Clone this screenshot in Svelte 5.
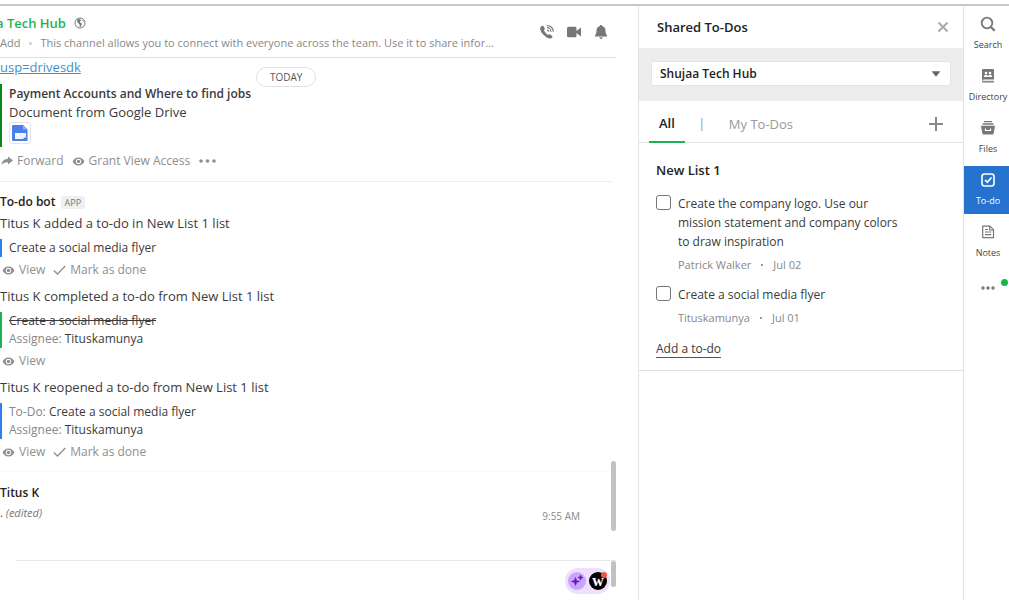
<script>
  const updates = [
    {
      text: "Titus K added a to-do in New List 1 list",
      title: "Create a social media flyer",
      canFinish: true,
    },
    {
      text: "Titus K completed a to-do from New List 1 list",
      title: "Create a social media flyer",
      assignee: "Tituskamunya",
      done: true,
    },
    {
      text: "Titus K reopened a to-do from New List 1 list",
      label: "To-Do:",
      title: "Create a social media flyer",
      assignee: "Tituskamunya",
      canFinish: true,
    },
  ];

  let todos = [
    {
      id: 1,
      text: "Create the company logo. Use our mission statement and company colors to draw inspiration",
      who: "Patrick Walker",
      due: "Jul 02",
      done: false,
    },
    {
      id: 2,
      text: "Create a social media flyer",
      who: "Tituskamunya",
      due: "Jul 01",
      done: false,
    },
  ];

  const apps = ["Search", "Directory", "Files", "To-do", "Notes"];

  let activeApp = "To-do";
  let tab = "all";
  let channel = "Shujaa Tech Hub";
</script>

{#snippet eye()}
  <svg width="13" height="9" viewBox="0 0 14 10" aria-hidden="true">
    <path
      fill="currentColor"
      fill-rule="evenodd"
      d="M7 .5C3.800.5 1.300 2.500 .5 5c.8 2.500 3.300 4.500 6.500 4.500s5.700-2 6.500-4.500C12.700 2.500 10.200.5 7 .5zM7 2a3 3 0 1 1 0 6 3 3 0 0 1 0-6z"
    />
    <circle cx="7" cy="5" r="1.900" fill="currentColor" />
  </svg>
{/snippet}

<div class="app">
  <main class="chat">
    <header class="chat-header">
      <div class="heading">
        <div class="title-row">
          <h1>a Tech Hub</h1>
          <svg width="12" height="12" viewBox="0 0 12 12" aria-hidden="true">
            <circle cx="6" cy="6" r="5" fill="none" stroke="#777" />
            <path d="M3 2.500 5.500 2l2 1.200-1.500 1L6.500 6 8 6.500 7 9.500 5.800 10 5.500 7.200 3.500 5.500zM8.500 2.500l1.500 2-1.200.3z" fill="#777" />
          </svg>
        </div>
        <div class="topic">
          <button type="button">Add</button>
          <i></i>
          <span>This channel allows you to connect with everyone across the team. Use it to share infor...</span>
        </div>
      </div>
      <div class="calls">
        <button type="button" aria-label="Call">
          <svg width="16" height="16" viewBox="0 0 16 16">
            <path d="M2.300 2.200c1-.9 2-.6 2.500.3l.9 1.700c.3.700.1 1.200-.7 1.900-.4.500 3.200 5 4 4.600.9-.6 1.400-.7 2-.3l1.900 1.300c.8.600.8 1.500-.2 2.200-1.200.9-2.800.8-4.500-.2C5 12 2.300 9 1.400 6.100.9 4.500 1.200 3.200 2.300 2.200z" fill="#777" />
            <path d="M8 1.500c3.500 0 6.300 2.700 6.300 6.200M8 3.700c2.200 0 4 1.800 4 4M8 6c1 0 1.700.7 1.700 1.700" fill="none" stroke="#777" stroke-width="1.200" />
          </svg>
        </button>
        <button type="button" aria-label="Video">
          <svg width="16" height="16" viewBox="0 0 16 16">
            <path d="M2.500 2.800h6.500a1.500 1.500 0 0 1 1.500 1.500v7.400a1.500 1.500 0 0 1-1.500 1.500H2.500A1.500 1.500 0 0 1 1 11.700V4.300a1.500 1.500 0 0 1 1.500-1.500zM10.500 7l4.500-3.400v8.800L10.500 9z" fill="#777" />
          </svg>
        </button>
        <button type="button" aria-label="Notifications">
          <svg width="16" height="16" viewBox="0 0 16 16">
            <path d="M8 1c.7 0 1.200.5 1.200 1.100C11.500 2.700 12.500 4.400 12.500 6.500c0 3 .6 3.700 1.500 4.700v1.300H2v-1.300c.9-1 1.500-1.700 1.500-4.700 0-2.100 1-3.800 3.300-4.400C6.800 1.500 7.300 1 8 1zM6.300 13.200h3.400C9.500 14.300 8.900 14.800 8 14.800s-1.500-.5-1.700-1.600z" fill="#777" />
          </svg>
        </button>
      </div>
    </header>

    <div class="messages">
      <span class="day">TODAY</span>
      <article class="message first">
        <a class="drive-link" href="#doc">usp=drivesdk</a>
        <div class="quote drive">
          <strong>Payment Accounts and Where to find jobs</strong>
          <p>Document from Google Drive</p>
          <span class="doc">
            <svg width="18" height="18" viewBox="0 0 18 18" aria-hidden="true">
              <path d="M2 1h10l4.500 4.500V17H2a1 1 0 0 1-1-1V2a1 1 0 0 1 1-1z" fill="#4a80e8" />
              <path d="M12 1v4.500h4.500z" fill="#8fb1f3" />
              <path d="M4 9h11v4.500h-1.500L12 15H4z" fill="#eef3fd" />
            </svg>
          </span>
        </div>
        <div class="actions">
          <button type="button">
            <svg width="12" height="10" viewBox="0 0 12 10" aria-hidden="true">
              <path d="M7 .5 12 4.500l-5 4V6.300C3.800 6.200 2 7 .5 9 .8 5.500 3 3 7 2.800z" fill="currentColor" />
            </svg>
            Forward
          </button>
          <button type="button">{@render eye()}Grant View Access</button>
          <button type="button" aria-label="More">
            <svg width="18" height="4" viewBox="0 0 18 4">
              <g fill="currentColor"><circle cx="3" cy="2" r="1.800" /><circle cx="9.500" cy="2" r="1.800" /><circle cx="16" cy="2" r="1.800" /></g>
            </svg>
          </button>
        </div>
      </article>

      <article class="message bot">
        <h2>To-do bot <small>APP</small></h2>
        {#each updates as update}
          <section class="update">
            <p>{update.text}</p>
            <div class="quote" class:done={update.done}>
              <div>
                {#if update.label}<em>{update.label}</em>{/if}
                <span class="task">{update.title}</span>
              </div>
              {#if update.assignee}
                <div><em>Assignee:</em> {update.assignee}</div>
              {/if}
            </div>
            <div class="actions">
              <button type="button">{@render eye()}View</button>
              {#if update.canFinish}
                <button type="button">
                  <svg width="13" height="10" viewBox="0 0 13 10" aria-hidden="true">
                    <path d="M.8 5.500 4.500 9 12.300 1" fill="none" stroke="currentColor" stroke-width="1.300" />
                  </svg>
                  Mark as done
                </button>
              {/if}
            </div>
          </section>
        {/each}
      </article>

      <article class="message last">
        <h2>Titus K</h2>
        <div class="edited-row">
          <p>. <i>(edited)</i></p>
          <time>9:55 AM</time>
        </div>
      </article>
      <span class="thumb"></span>
    </div>

    <footer class="composer">
      <div class="helpers">
        <button type="button" class="spark" aria-label="Assistant">
          <svg width="14" height="14" viewBox="0 0 14 14">
            <path d="M5.500 3.500c.5 2.600 1 3.400 4 4-3 .6-3.500 1.400-4 4-.5-2.600-1-3.400-4-4 3-.6 3.500-1.400 4-4zM10.500 1c.3 1.800.7 2.200 2.500 2.600-1.800.4-2.200.8-2.500 2.600-.3-1.800-.7-2.200-2.500-2.600 1.800-.4 2.200-.8 2.500-2.600z" fill="#6a13c9" stroke="#6a13c9" stroke-width=".7" />
          </svg>
        </button>
        <button type="button" class="writer">w<i></i></button>
      </div>
      <span class="thumb"></span>
    </footer>
  </main>

  <aside class="panel">
    <header class="panel-header">
      <h2>Shared To-Dos</h2>
      <button type="button" aria-label="Close">
        <svg width="12" height="12" viewBox="0 0 12 12">
          <path d="M1.500 1.500l9 9M10.500 1.500l-9 9" stroke="#aaa" stroke-width="2" />
        </svg>
      </button>
    </header>

    <div class="picker">
      <select bind:value={channel} aria-label="Channel">
        <option>Shujaa Tech Hub</option>
      </select>
      <svg width="10" height="6" viewBox="0 0 10 6" aria-hidden="true">
        <path d="M.5.300h9L5 5.700z" fill="#666" />
      </svg>
    </div>

    <nav class="tabs">
      <button type="button" class:current={tab === "all"} on:click={() => (tab = "all")}>All</button>
      <span>|</span>
      <button type="button" class:current={tab === "mine"} on:click={() => (tab = "mine")}>My To-Dos</button>
      <button type="button" class="add-list" aria-label="Add list">
        <svg width="14" height="14" viewBox="0 0 14 14">
          <path d="M7 0v14M0 7h14" stroke="#8a8a8a" stroke-width="2" />
        </svg>
      </button>
    </nav>

    <section class="list">
      <h3>New List 1</h3>
      {#each todos as todo (todo.id)}
        <div class="todo">
          <input id="todo-{todo.id}" type="checkbox" bind:checked={todo.done} />
          <div>
            <label for="todo-{todo.id}">{todo.text}</label>
            <div class="meta"><span>{todo.who}</span><b></b><span>{todo.due}</span></div>
          </div>
        </div>
      {/each}
      <button type="button" class="add">Add a to-do</button>
    </section>
  </aside>

  <nav class="rail">
    {#each apps as app}
      <button type="button" class:active={activeApp === app} on:click={() => (activeApp = app)}>
        <svg width="16" height="16" viewBox="0 0 16 16" aria-hidden="true">
          {#if app === "Search"}
            <circle cx="7" cy="7" r="5.300" fill="none" stroke="#777" stroke-width="1.800" />
            <path d="M11 11l3.700 3.700" stroke="#777" stroke-width="2.200" />
          {:else if app === "Directory"}
            <path d="M3.500 1h9.500a1 1 0 0 1 1 1v9.500H3.500c-.6 0-.6 1 0 1H14v2H3.500C2.500 14.500 2 13.800 2 13V2.500C2 1.600 2.600 1 3.500 1z" fill="#777" />
            <circle cx="6" cy="5" r="1.300" fill="#fff" />
            <circle cx="10" cy="5" r="1.300" fill="#fff" />
            <path d="M3.800 9c0-3 3.700-3 4.200-.5C8.500 6 12.200 6 12.200 9z" fill="#fff" />
            <path d="M2.500 12.700H14" stroke="#fff" stroke-width=".8" />
          {:else if app === "Files"}
            <path d="M4.500 1.700h7M3 4h10" stroke="#777" stroke-width="1.300" stroke-linecap="round" />
            <path d="M1 5.700h14l-1.300 7.500c-.2.900-.7 1.300-1.500 1.300H3.800c-.8 0-1.300-.4-1.500-1.300z" fill="#777" />
            <path d="M5.500 8.500v2h5v-2" fill="none" stroke="#fff" stroke-width="1.200" />
          {:else if app === "To-do"}
            <rect x="2" y="2" width="12" height="12" rx="2.500" fill="none" stroke="#fff" stroke-width="1.600" />
            <path d="M5 8l2.300 2.200L11.500 5.500" fill="none" stroke="#fff" stroke-width="1.700" />
          {:else}
            <path d="M2.700 2.200h7.300l3.500 3.500v8H2.700z" fill="none" stroke="#777" stroke-width="1.200" />
            <path d="M9.700 2.200v3.800h3.800M5 5.500h3M5 8h6.300M5 10.700h6.300" fill="none" stroke="#777" stroke-width="1.200" />
          {/if}
        </svg>
        {app}
      </button>
    {/each}
    <button type="button" class="more" aria-label="More apps">
      <svg width="14" height="4" viewBox="0 0 14 4">
        <g fill="#777"><circle cx="2" cy="2" r="1.700" /><circle cx="7" cy="2" r="1.700" /><circle cx="12" cy="2" r="1.700" /></g>
      </svg>
      <i></i>
    </button>
  </nav>
</div>

<style>
  :global(body) {
    background: #fff;
    color: #3b3b3b;
    font: 13px/20px "Open Sans", "Noto Sans", sans-serif;
  }
  h1,
  h2,
  h3,
  p {
    margin: 0;
  }
  h2 {
    font-size: 12px;
    font-weight: 600;
    color: #222;
  }
  button {
    border: none;
    padding: 0;
    background: none;
    color: inherit;
    font: inherit;
    cursor: pointer;
  }
  svg {
    display: block;
    flex: none;
  }
  .app {
    display: grid;
    grid-template-columns: minmax(0, 1fr) 325px 46px;
    box-sizing: border-box;
    min-height: calc(100vh - 4px);
    margin-top: 4px;
    border-top: 2px solid #c8c8c8;
  }

  /* chat */
  .chat {
    display: flex;
    flex-direction: column;
    padding-right: 22px;
    overflow: hidden;
  }
  .chat-header {
    display: flex;
    justify-content: space-between;
    padding: 6px 7px 5px 0;
    border-bottom: 1px solid #ddd;
  }
  .heading {
    min-width: 0;
  }
  .title-row {
    display: flex;
    align-items: center;
    gap: 8px;
    line-height: 22px;
  }
  h1 {
    margin-left: -4px;
    font-size: 13px;
    font-weight: 600;
    color: #1fb254;
  }
  .topic {
    display: flex;
    align-items: center;
    font-size: 11px;
    line-height: 18px;
    color: #888;
    white-space: nowrap;
  }
  .topic i {
    width: 3px;
    height: 3px;
    margin: 0 8px 0 9px;
    border-radius: 50%;
    background: #ccc;
  }
  .calls {
    display: flex;
    align-items: center;
    gap: 11px;
  }
  .messages {
    position: relative;
    flex: 1;
  }
  .day {
    position: absolute;
    top: 9px;
    left: 256px;
    padding: 0 13px;
    border: 1px solid #e2e2e2;
    border-radius: 10px;
    background: #fff;
    font-size: 10px;
    line-height: 18px;
    color: #555;
  }
  .message {
    margin-right: 4px;
    border-bottom: 1px solid #eee;
  }
  .first {
    padding-bottom: 11px;
  }
  .drive-link {
    display: block;
    line-height: 18px;
    color: #3f8fd2;
  }
  .quote {
    border-left: 2px solid #2f80ed;
    padding-left: 7px;
    font-size: 12px;
    line-height: 18px;
  }
  .quote.done {
    border-color: #1fb254;
  }
  .quote.drive {
    margin-top: 8px;
    padding-bottom: 3px;
    border-color: #0b8a1c;
    line-height: 19px;
  }
  .drive p {
    font-size: 13px;
  }
  strong {
    font-weight: 600;
  }
  .doc {
    display: grid;
    place-items: center;
    width: 20px;
    height: 20px;
    border: 1px solid #e3e3e3;
    border-radius: 3px;
  }
  .quote em {
    font-style: normal;
    color: #888;
  }
  .done .task {
    text-decoration: line-through;
  }
  .actions {
    display: flex;
    gap: 8px;
    margin: 4px 0 0 2px;
    font-size: 12px;
    line-height: 18px;
    color: #8f8f8f;
  }
  .first .actions {
    margin: 5px 0 0 1px;
  }
  .actions button {
    display: flex;
    align-items: center;
    gap: 4px;
  }
  .bot {
    padding: 10px 0;
    border-color: #f8f8f8;
  }
  small {
    margin-left: 2px;
    padding: 0 4px;
    border-radius: 2px;
    background: #f0f0f0;
    font-size: 9px;
    font-weight: 400;
    color: #777;
  }
  .update + .update {
    margin-top: 7px;
  }
  .update .quote {
    margin-top: 6px;
  }
  .last {
    padding-top: 11px;
    border: none;
  }
  .edited-row {
    display: flex;
    justify-content: space-between;
    margin-right: 32px;
    font-size: 11px;
  }
  .edited-row i {
    color: #777;
  }
  time {
    padding-top: 3px;
    font-size: 10px;
    color: #888;
  }
  .thumb {
    position: absolute;
    right: 0;
    width: 5px;
    border-radius: 3px;
    background: #c2c2c2;
  }
  .messages .thumb {
    bottom: 29px;
    height: 70px;
  }
  .composer {
    position: relative;
    display: flex;
    justify-content: flex-end;
    align-items: flex-start;
    min-height: 32px;
    margin-left: 16px;
    padding: 7px 6px 0 0;
    border-top: 1px solid #e8e8e8;
  }
  .composer .thumb {
    top: 0;
    height: 26px;
  }
  .helpers {
    display: flex;
    align-items: center;
    gap: 3px;
    padding: 4px 3px;
    border-radius: 13px;
    background: #eee0fd;
  }
  .helpers button {
    display: grid;
    place-items: center;
    width: 18px;
    height: 18px;
    border-radius: 50%;
  }
  .helpers .spark {
    background: #c9a4fb;
  }
  .helpers .writer {
    position: relative;
    background: #000;
    color: #fff;
    font: bold 16px/14px "Liberation Serif", serif;
  }
  .writer i {
    position: absolute;
    top: 0;
    right: 0;
    width: 6px;
    height: 6px;
    border-radius: 50%;
    background: #f0553f;
  }

  /* to-do panel */
  .panel {
    border-left: 1px solid #e2e2e2;
  }
  .panel-header {
    display: flex;
    justify-content: space-between;
    align-items: center;
    height: 42px;
    padding: 0 14px 0 18px;
  }
  .panel-header h2 {
    font-size: 13px;
  }
  .picker {
    position: relative;
    padding: 13px 12px 15px;
    background: #ededed;
  }
  select {
    appearance: none;
    display: block;
    width: 100%;
    height: 25px;
    padding: 0 8px;
    border: 1px solid #e4e4e4;
    border-radius: 2px;
    background: #fff;
    color: #222;
    font: 600 12px "Open Sans", "Noto Sans", sans-serif;
  }
  .picker svg {
    position: absolute;
    top: 23px;
    right: 22px;
    pointer-events: none;
  }
  .tabs {
    display: flex;
    align-items: center;
    height: 41px;
    padding: 0 20px 0 10px;
    border-bottom: 1px solid #e2e2e2;
    color: #999;
  }
  .tabs button {
    align-self: stretch;
    padding: 4px 10px 0;
  }
  .tabs span {
    width: 34px;
    padding-top: 2px;
    text-align: center;
  }
  .tabs .current {
    margin-bottom: -1px;
    border-bottom: 2px solid #1fb254;
    font-weight: 600;
    color: #222;
  }
  .tabs .add-list {
    margin-left: auto;
    padding: 4px 0 0;
  }
  .list {
    padding: 17px 52px 12px 17px;
    border-bottom: 1px solid #ddd;
  }
  h3 {
    margin-bottom: 14px;
    font-size: 13px;
    font-weight: 600;
    color: #222;
  }
  .todo {
    display: flex;
    gap: 7px;
    margin-bottom: 11px;
    font-size: 12px;
    line-height: 19px;
  }
  .todo input {
    appearance: none;
    flex: none;
    width: 15px;
    height: 15px;
    margin: 1px 0 0;
    border: 1px solid #777;
    border-radius: 3px;
  }
  .todo input:checked {
    background: #1fb254;
  }
  label {
    display: block;
  }
  .meta {
    display: flex;
    align-items: center;
    gap: 10px;
    margin-top: 5px;
    font-size: 11px;
    line-height: 18px;
    color: #888;
  }
  .meta b {
    width: 2px;
    height: 2px;
    border-radius: 50%;
    background: #777;
  }
  .add {
    border-bottom: 1px solid #555;
    font-size: 12px;
    line-height: 17px;
  }

  /* app rail */
  .rail {
    display: flex;
    flex-direction: column;
    gap: 4px;
    padding-top: 4px;
    border-left: 1px solid #e2e2e2;
    font-size: 9px;
    line-height: 16px;
    color: #444;
  }
  .rail button {
    display: flex;
    flex-direction: column;
    align-items: center;
    gap: 5px;
    height: 48px;
    padding: 6px 0 0 3px;
  }
  .rail .active {
    background: #2672cf;
    color: #fff;
  }
  .rail .more {
    position: relative;
    padding-top: 16px;
  }
  .more i {
    position: absolute;
    top: 9px;
    right: 1px;
    width: 7px;
    height: 7px;
    border-radius: 50%;
    background: #14b84b;
  }
</style>
